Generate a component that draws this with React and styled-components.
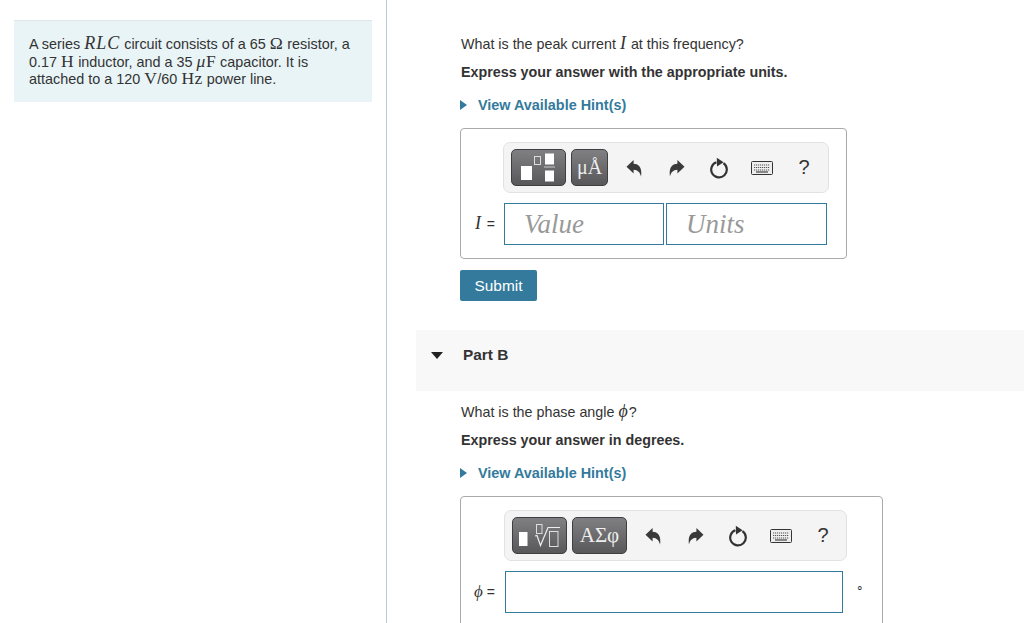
import React from "react";
import styled, { createGlobalStyle } from "styled-components";

const GlobalStyle = createGlobalStyle`
  html, body {
    margin: 0;
    padding: 0;
    background: #fff;
  }
  body {
    font-family: "Liberation Sans", Arial, sans-serif;
    font-size: 14.3px;
    color: #333;
  }
`;

const UndoIcon = ({ flip }) => (
  <svg width="16" height="18" viewBox="0 0 16 18" style={flip ? { transform: "scaleX(-1)" } : undefined}>
    <path d="M0.5 7.8 L7.6 1 V4.8 C12.8 5 16.4 8.6 15 17.6 C14 13.4 12 11 7.6 10.8 V14.6 Z" fill="#3a3a3a" />
  </svg>
);

const ResetIcon = () => (
  <svg width="20" height="22" viewBox="0 0 20 22">
    <path d="M14.4 6.2 A7.8 7.8 0 1 1 7.4 5.3" fill="none" stroke="#333" strokeWidth="2.2" />
    <path d="M7.8 0.8 L14.6 5.2 L8 9.6 Z" fill="#333" />
  </svg>
);

const KeyboardIcon = () => (
  <svg width="22" height="14" viewBox="0 0 22 14">
    <rect x="0.5" y="0.5" width="21" height="13" rx="1" fill="#eee" stroke="#333" />
    <path d="M3 4 H19 M3 6.5 H19 M3 9 H19" stroke="#555" strokeWidth="1.2" strokeDasharray="1.2 .8" />
    <path d="M5 11 H17" stroke="#444" strokeWidth="1.2" />
  </svg>
);

const TemplatesGlyph = () => (
  <svg width="36" height="30" viewBox="0 0 36 30">
    <rect x="0" y="13" width="11" height="14" fill="#fff" />
    <rect x="13.5" y="3.5" width="6" height="8" fill="none" stroke="#ddd" />
    <rect x="24" y="0.5" width="9" height="11" fill="#fff" />
    <rect x="23" y="13.5" width="11" height="1" fill="#ccc" />
    <rect x="24" y="17.5" width="9" height="11" fill="#fff" />
  </svg>
);

const RadicalGlyph = () => (
  <svg width="42" height="30" viewBox="0 0 42 30">
    <rect x="0" y="11" width="8.5" height="14" fill="#fff" />
    <rect x="17.5" y="3.5" width="5.5" height="9" fill="none" stroke="#ddd" />
    <path d="M16 15 L18 14.5 L21.5 24.5 L29 6.5 H41" fill="none" stroke="#eee" strokeWidth="1.2" />
    <rect x="30.5" y="10.5" width="8.5" height="15" fill="none" stroke="#ddd" />
  </svg>
);

const Toolbar = ({ first, second, wide }) => (
  <ToolbarWrap $wide={wide}>
    <MathButton $width={55}>{first}</MathButton>
    <MathButton $width={wide ? 55 : 37}>
      <SymbolText $wide={wide}>{second}</SymbolText>
    </MathButton>
    <ToolIcons>
      <ToolIcon><UndoIcon /></ToolIcon>
      <ToolIcon><UndoIcon flip /></ToolIcon>
      <ToolIcon><ResetIcon /></ToolIcon>
      <ToolIcon><KeyboardIcon /></ToolIcon>
      <HelpMark>?</HelpMark>
    </ToolIcons>
  </ToolbarWrap>
);

const Hint = () => (
  <HintRow>
    <HintArrow />
    View Available Hint(s)
  </HintRow>
);

export default function App() {
  return (
    <Page>
      <GlobalStyle />
      <LeftColumn>
        <ProblemBox>
          A series <MathVar>RLC</MathVar> circuit consists of a 65 <MathRoman>Ω</MathRoman> resistor, a
          <br />
          0.17 <MathRoman>H</MathRoman> inductor, and a 35 <MathRoman><i>μ</i>F</MathRoman> capacitor. It is
          <br />
          attached to a 120 <MathRoman>V</MathRoman>/60 <MathRoman>Hz</MathRoman> power line.
        </ProblemBox>
      </LeftColumn>
      <RightColumn>
        <PartBody $top={35}>
          <Question>
            What is the peak current <MathVar>I</MathVar> at this frequency?
          </Question>
          <Instruction>Express your answer with the appropriate units.</Instruction>
          <Hint />
          <AnswerBox $width={387} $pad={13}>
            <ToolbarRow $offset={42}>
              <Toolbar first={<TemplatesGlyph />} second="μÅ" />
            </ToolbarRow>
            <InputRow>
              <InputLabel>
                <LabelVar $wide>I</LabelVar> =
              </InputLabel>
              <TextBox $width={160}>Value</TextBox>
              <TextBox $width={161}>Units</TextBox>
            </InputRow>
          </AnswerBox>
          <SubmitButton>Submit</SubmitButton>
        </PartBody>
        <PartHeader>
          <Caret />
          <PartTitle>Part B</PartTitle>
        </PartHeader>
        <PartBody $top={12}>
          <Question>
            What is the phase angle <MathVar>ϕ</MathVar>?
          </Question>
          <Instruction>Express your answer in degrees.</Instruction>
          <Hint />
          <AnswerBox $width={423} $pad={13}>
            <ToolbarRow $offset={43}>
              <Toolbar first={<RadicalGlyph />} second="ΑΣφ" wide />
            </ToolbarRow>
            <InputRow>
              <InputLabel $phi>
                <LabelVar>ϕ</LabelVar> =
              </InputLabel>
              <TextBox $width={338} />
              <DegreeMark>∘</DegreeMark>
            </InputRow>
          </AnswerBox>
        </PartBody>
      </RightColumn>
    </Page>
  );
}

const Page = styled.div`
  display: flex;
  width: 1024px;
  height: 623px;
  overflow: hidden;
`;

const LeftColumn = styled.div`
  width: 387px;
  flex-shrink: 0;
  box-sizing: border-box;
  padding: 20px 14px 0;
  border-right: 1px solid #b8cbd8;
`;

const ProblemBox = styled.div`
  width: 358px;
  height: 82px;
  box-sizing: border-box;
  padding: 15px 15px 0;
  background: #e9f4f7;
  border-top: 1px solid #dfe5e8;
  font-size: 14.4px;
  line-height: 17.5px;
  color: #333;
`;

const MathVar = styled.i`
  font-family: "Liberation Serif", "Times New Roman", serif;
  font-size: 18px;
  letter-spacing: 1px;
  line-height: 0;
  color: #333;
`;

const LabelVar = styled.i`
  font-family: "Liberation Serif", "Times New Roman", serif;
  font-size: ${props => (props.$wide ? "18px" : "17px")};
  margin-right: ${props => (props.$wide ? "2px" : "0")};
  line-height: 0;
  color: #333;
`;

const MathRoman = styled.span`
  font-family: "Liberation Serif", "Times New Roman", serif;
  font-size: 17.5px;
  letter-spacing: 0.5px;
  line-height: 0;
`;

const RightColumn = styled.div`
  flex: 1;
  min-width: 0;
  display: flex;
  flex-direction: column;
  padding-left: 29px;
`;

const PartBody = styled.div`
  flex-shrink: 0;
  padding: ${props => props.$top}px 0 0 44px;
`;

const Question = styled.div`
  height: 18px;
  padding-left: 1px;
  line-height: 18px;
  color: #333;
`;

const Instruction = styled.div`
  margin-top: 10px;
  height: 18px;
  padding-left: 1px;
  line-height: 18px;
  font-weight: bold;
  color: #333;
`;

const HintRow = styled.div`
  display: flex;
  align-items: center;
  margin-top: 15px;
  height: 18px;
  font-size: 14.4px;
  font-weight: bold;
  color: #337a9c;
`;

const HintArrow = styled.span`
  width: 0;
  height: 0;
  margin-right: 11px;
  border-left: 7px solid #337a9c;
  border-top: 5.5px solid transparent;
  border-bottom: 5.5px solid transparent;
`;

const AnswerBox = styled.div`
  width: ${props => props.$width}px;
  box-sizing: border-box;
  margin-top: 14px;
  padding: ${props => props.$pad}px 12px 13px;
  border: 1px solid #aaa;
  border-radius: 4px;
`;

const ToolbarRow = styled.div`
  padding-left: ${props => props.$offset - 12}px;
`;

const ToolbarWrap = styled.div`
  display: flex;
  align-items: center;
  gap: 5px;
  box-sizing: border-box;
  width: ${props => (props.$wide ? 343 : 326)}px;
  height: 51px;
  padding: 0 7px;
  background: #f4f4f4;
  border: 1px solid #e2e2e2;
  border-radius: 7px;
`;

const MathButton = styled.div`
  display: flex;
  align-items: center;
  justify-content: center;
  flex-shrink: 0;
  box-sizing: border-box;
  width: ${props => props.$width}px;
  height: 37px;
  background: linear-gradient(#808082, #58585a);
  border: 1px solid #3f3f41;
  border-radius: 5px;
`;

const SymbolText = styled.span`
  font-family: "Liberation Serif", "Times New Roman", serif;
  font-size: ${props => (props.$wide ? "21px" : "20px")};
  color: #eee;
`;

const ToolIcons = styled.div`
  display: flex;
  align-items: center;
  gap: 20.5px;
  padding-left: 10px;
`;

const ToolIcon = styled.span`
  display: flex;
  align-items: center;
  justify-content: center;
  width: 22px;
  height: 22px;
`;

const HelpMark = styled.span`
  width: 22px;
  text-align: center;
  font-size: 20px;
  color: #333;
`;

const InputRow = styled.div`
  display: flex;
  align-items: center;
  gap: 2px;
  margin-top: 10px;
`;

const InputLabel = styled.div`
  width: ${props => (props.$phi ? 30 : 29)}px;
  text-align: right;
  padding-right: ${props => (props.$phi ? 8 : 7)}px;
  box-sizing: border-box;
  flex-shrink: 0;
  font-size: 14px;
  white-space: nowrap;
  color: #333;
`;

const TextBox = styled.div`
  display: flex;
  align-items: center;
  width: ${props => props.$width}px;
  height: 42px;
  box-sizing: border-box;
  padding-left: 19px;
  border: 1px solid #337a9c;
  font-family: "Liberation Serif", "Times New Roman", serif;
  font-style: italic;
  font-size: 27px;
  color: #999;
`;

const DegreeMark = styled.span`
  margin-left: 11px;
  margin-top: -8px;
  font-size: 12px;
  color: #333;
`;

const SubmitButton = styled.div`
  display: flex;
  align-items: center;
  justify-content: center;
  width: 77px;
  height: 31px;
  margin-top: 11px;
  background: #337a9c;
  border-radius: 2px;
  color: #fff;
  font-size: 15.4px;
`;

const PartHeader = styled.div`
  display: flex;
  flex-shrink: 0;
  align-items: flex-start;
  height: 61px;
  margin-top: 29px;
  padding-top: 16px;
  box-sizing: border-box;
  background: #f8f8f8;
`;

const Caret = styled.span`
  width: 0;
  height: 0;
  margin: 6px 20px 0 15px;
  border-top: 7px solid #222;
  border-left: 6px solid transparent;
  border-right: 6px solid transparent;
`;

const PartTitle = styled.div`
  font-size: 15.4px;
  line-height: 18px;
  font-weight: bold;
  color: #333;
`;
